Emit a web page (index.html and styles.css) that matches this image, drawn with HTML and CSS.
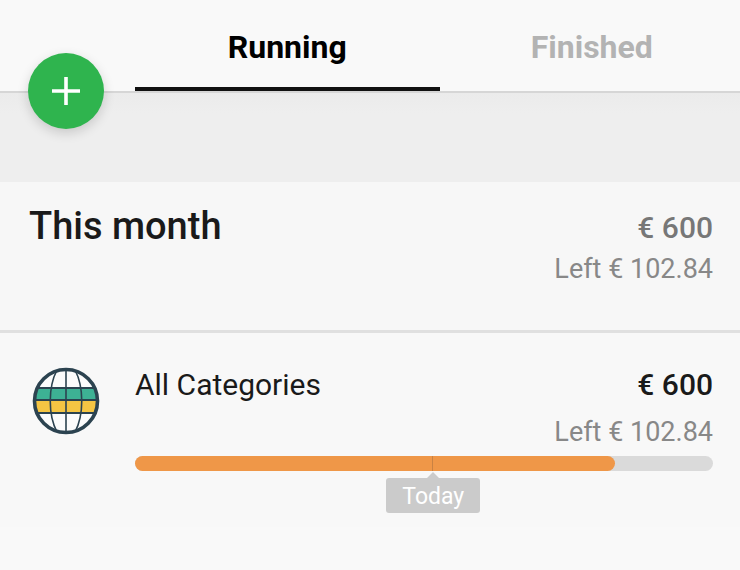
FILE: index.html
```html
<!DOCTYPE html>
<html lang="en">
<head>
  <meta charset="UTF-8">
  <meta name="viewport" content="width=device-width, initial-scale=1">
  <title>Budgets</title>
  <link rel="stylesheet" href="styles.css">
</head>
<body>

  <header class="topbar">
    <button class="add" type="button" aria-label="Add budget">
      <svg width="28" height="28" viewBox="0 0 28 28">
        <path d="M14 0v28M0 14h28" stroke="#fff" stroke-width="3.6"/>
      </svg>
    </button>
    <nav class="tabs">
      <a class="tab active" href="#running">Running</a>
      <a class="tab" href="#finished">Finished</a>
    </nav>
  </header>

  <div class="spacer"></div>

  <main>
    <section class="summary">
      <h1>This month</h1>
      <div class="amounts">
        <p class="total">€ 600</p>
        <p class="left">Left € 102.84</p>
      </div>
    </section>

    <section class="budget">
      <svg class="globe" width="68" height="68" viewBox="0 0 68 68">
        <defs>
          <clipPath id="disc"><circle cx="34" cy="34" r="32"/></clipPath>
        </defs>
        <circle cx="34" cy="34" r="32" fill="#fbfbfb"/>
        <g clip-path="url(#disc)">
          <rect y="21" width="68" height="12" fill="#3db194"/>
          <rect y="34" width="68" height="12" fill="#f5c543"/>
          <g fill="none" stroke="#2c4350" stroke-width="2">
            <path d="M0 21h68M0 33h68M0 46h68"/>
            <path d="M34 0v68" stroke-width="1.6"/>
            <path d="M25 3C16 20 16 48 25 65M43 3c9 17 9 45 0 62" stroke-width="1.6"/>
          </g>
        </g>
        <circle cx="34" cy="34" r="31.5" fill="none" stroke="#2c4350" stroke-width="3.6"/>
      </svg>
      <div class="details">
        <div class="row">
          <h2>All Categories</h2>
          <p class="total">€ 600</p>
        </div>
        <p class="left">Left € 102.84</p>
        <div class="bar">
          <div class="fill" style="width: 83%"></div>
          <div class="today" style="left: 51.6%">Today</div>
        </div>
      </div>
    </section>
  </main>

</body>
</html>
```

FILE: styles.css
```css
* {
  margin: 0;
  padding: 0;
  box-sizing: border-box;
}

body {
  padding-top: 36px;
  font-family: Roboto, sans-serif;
  background-color: #f9f9f9;
  color: #1a1a1a;
  overflow-x: hidden;
}

.topbar {
  position: relative;
  padding-left: 135px;
  border-bottom: 2px solid #d6d6d6;
}

.tabs {
  display: flex;
  margin-right: -4px;
}

.tab {
  flex: 1;
  height: 55px;
  border-bottom: 4px solid transparent;
  font-size: 32px;
  line-height: 22px;
  font-weight: 700;
  text-align: center;
  text-decoration: none;
  color: #b3b3b3;
}

.tab.active {
  color: #000;
  border-bottom-color: #111;
}

.add {
  position: absolute;
  left: 28px;
  top: 17px;
  display: flex;
  align-items: center;
  justify-content: center;
  width: 76px;
  height: 76px;
  border: none;
  border-radius: 50%;
  background-color: #2fb44e;
  box-shadow: 0 4px 12px rgba(0, 0, 0, 0.16);
  cursor: pointer;
}

.spacer {
  height: 89px;
  background: linear-gradient(#ebebeb, #eeeeee 20px);
}

.summary {
  display: flex;
  justify-content: space-between;
  padding: 24px 27px 40px 29px;
  border-bottom: 3px solid #e0e0e0;
  background-color: #f7f7f7;
}

h1 {
  font-size: 38px;
  line-height: 40px;
  font-weight: 500;
}

.amounts {
  padding-top: 2px;
  text-align: right;
}

.total {
  font-size: 30px;
  line-height: 40px;
  font-weight: 500;
}

.summary .total {
  color: #777;
}

.left {
  font-size: 27px;
  line-height: 42px;
  text-align: right;
  color: #888;
}

.budget {
  display: flex;
  gap: 35px;
  padding: 32px 27px 56px 32px;
  background-color: #f8f8f8;
}

.globe {
  flex: none;
  margin-top: 2px;
}

.details {
  flex: 1;
}

.row {
  display: flex;
  justify-content: space-between;
  margin-bottom: 6px;
}

h2 {
  font-size: 30px;
  line-height: 40px;
  font-weight: 400;
}

.bar {
  position: relative;
  height: 15px;
  margin-top: 3px;
  border-radius: 8px;
  background-color: #dadada;
}

.fill {
  height: 100%;
  border-radius: 8px;
  background-color: #ef9748;
}

.today {
  position: absolute;
  top: 22px;
  width: 94px;
  margin-left: -47px;
  padding-top: 3px;
  border-radius: 3px;
  background-color: #cbcbcb;
  color: #fff;
  font-size: 23px;
  line-height: 32px;
  text-align: center;
}

/* marker line across the bar */
.today::before {
  content: "";
  position: absolute;
  left: 46px;
  top: -22px;
  width: 1px;
  height: 15px;
  background-color: #c98243;
}

.today::after {
  content: "";
  position: absolute;
  left: 40px;
  top: -6px;
  border: 7px solid transparent;
  border-top: none;
  border-bottom-color: #cbcbcb;
}
```
